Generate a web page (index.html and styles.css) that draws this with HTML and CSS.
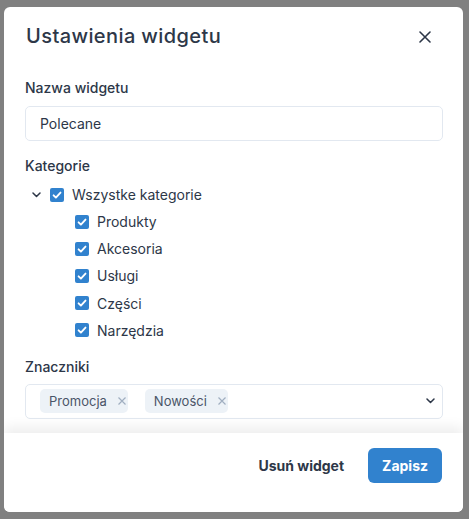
FILE: index.html
```html
<!DOCTYPE html>
<html lang="pl">
<head>
<meta charset="utf-8">
<title>Ustawienia widgetu</title>
<link rel="stylesheet" href="styles.css">
</head>
<body>
<div class="modal">
  <header class="modal-header">
    <h2 class="modal-title">Ustawienia widgetu</h2>
    <button class="close-btn" aria-label="Zamknij">
      <svg width="12" height="12" viewBox="0 0 12 12"><path d="M1 1L11 11M11 1L1 11" stroke="#2d3748" stroke-width="1.6" stroke-linecap="round"/></svg>
    </button>
  </header>
  <div class="modal-body">
    <label class="field-label">Nazwa widgetu</label>
    <div class="input">Polecane</div>

    <label class="field-label mt">Kategorie</label>
    <ul class="tree">
      <li class="tree-row root">
        <span class="chev"><svg width="9" height="6" viewBox="0 0 9 6"><path d="M1 1l3.5 3.5L8 1" fill="none" stroke="#2d3748" stroke-width="1.5" stroke-linecap="round" stroke-linejoin="round"/></svg></span>
        <span class="cb"><svg width="14" height="14" viewBox="0 0 14 14"><path d="M3.6 7.3l2.3 2.3 4.6-5" fill="none" stroke="#fff" stroke-width="1.9" stroke-linecap="round" stroke-linejoin="round"/></svg></span>
        <span class="item-text">Wszystke kategorie</span>
      </li>
      <li class="tree-row child">
        <span class="cb"><svg width="14" height="14" viewBox="0 0 14 14"><path d="M3.6 7.3l2.3 2.3 4.6-5" fill="none" stroke="#fff" stroke-width="1.9" stroke-linecap="round" stroke-linejoin="round"/></svg></span>
        <span class="item-text">Produkty</span>
      </li>
      <li class="tree-row child">
        <span class="cb"><svg width="14" height="14" viewBox="0 0 14 14"><path d="M3.6 7.3l2.3 2.3 4.6-5" fill="none" stroke="#fff" stroke-width="1.9" stroke-linecap="round" stroke-linejoin="round"/></svg></span>
        <span class="item-text">Akcesoria</span>
      </li>
      <li class="tree-row child">
        <span class="cb"><svg width="14" height="14" viewBox="0 0 14 14"><path d="M3.6 7.3l2.3 2.3 4.6-5" fill="none" stroke="#fff" stroke-width="1.9" stroke-linecap="round" stroke-linejoin="round"/></svg></span>
        <span class="item-text">Usługi</span>
      </li>
      <li class="tree-row child">
        <span class="cb"><svg width="14" height="14" viewBox="0 0 14 14"><path d="M3.6 7.3l2.3 2.3 4.6-5" fill="none" stroke="#fff" stroke-width="1.9" stroke-linecap="round" stroke-linejoin="round"/></svg></span>
        <span class="item-text">Części</span>
      </li>
      <li class="tree-row child">
        <span class="cb"><svg width="14" height="14" viewBox="0 0 14 14"><path d="M3.6 7.3l2.3 2.3 4.6-5" fill="none" stroke="#fff" stroke-width="1.9" stroke-linecap="round" stroke-linejoin="round"/></svg></span>
        <span class="item-text">Narzędzia</span>
      </li>
    </ul>

    <label class="field-label mt2">Znaczniki</label>
    <div class="select">
      <span class="tag">Promocja<span class="tag-x"><svg width="8" height="8" viewBox="0 0 8 8"><path d="M0.5 0.5L7.5 7.5M7.5 0.5L0.5 7.5" stroke="#a0aec0" stroke-width="1.2"/></svg></span></span>
      <span class="tag">Nowości<span class="tag-x"><svg width="8" height="8" viewBox="0 0 8 8"><path d="M0.5 0.5L7.5 7.5M7.5 0.5L0.5 7.5" stroke="#a0aec0" stroke-width="1.2"/></svg></span></span>
      <span class="select-chev"><svg width="9" height="6" viewBox="0 0 9 6"><path d="M1 1l3.5 3.5L8 1" fill="none" stroke="#2d3748" stroke-width="1.5" stroke-linecap="round" stroke-linejoin="round"/></svg></span>
    </div>
  </div>
  <footer class="modal-footer">
    <button class="btn ghost">Usuń widget</button>
    <button class="btn primary">Zapisz</button>
  </footer>
</div>
</body>
</html>
```
FILE: styles.css
```css
* { box-sizing: border-box; }
html, body { margin: 0; padding: 0; }
body {
  background: #808080;
  width: 469px;
  height: 519px;
  overflow: hidden;
  font-family: Inter, "Open Sans", sans-serif;
  color: #2d3748;
}
.modal {
  margin: 7px 0 0 4px;
  width: 459px;
  height: 505px;
  background: #fff;
  border-radius: 6px;
  overflow: hidden;
  display: flex;
  flex-direction: column;
}
.modal-header {
  height: 58px;
  flex: none;
  display: flex;
  align-items: center;
  justify-content: space-between;
  padding: 0 32px 0 22px;
}
.modal-title {
  margin: 0;
  font-size: 20px;
  line-height: 30px;
  font-weight: 500;
  letter-spacing: 0.4px;
  color: #2d3748;
}
.close-btn {
  border: 0;
  background: none;
  padding: 0;
  width: 12px;
  height: 12px;
  display: flex;
  margin-top: 1px;
}
.modal-body {
  flex: 1;
  overflow: hidden;
  padding: 13px 20px 0 21px;
  display: flex;
  flex-direction: column;
}
.field-label {
  display: block;
  font-size: 14px;
  line-height: 20px;
  font-weight: 500;
  color: #2d3748;
  margin-bottom: 8px;
}
.field-label.mt { margin-top: 15px; margin-bottom: 5px; }
.field-label.mt2 { margin-top: 13px; margin-bottom: 7px; }
.input {
  height: 35px;
  border: 1px solid #e2e8f0;
  border-radius: 5px;
  padding: 0 14px;
  display: flex;
  align-items: center;
  font-size: 14px;
  color: #2d3748;
  flex: none;
}
.tree {
  list-style: none;
  margin: 0;
  padding: 0;
  flex: none;
}
.tree-row {
  height: 27.2px;
  display: flex;
  align-items: center;
}
.tree-row.root { height: 27px; padding-left: 7px; }
.tree-row.child { padding-left: 50px; }
.chev {
  width: 9px;
  height: 6px;
  display: flex;
  margin-right: 9px;
}
.cb {
  width: 14px;
  height: 14px;
  border-radius: 2px;
  background: #3182ce;
  display: flex;
  flex: none;
}
.item-text {
  margin-left: 8px;
  font-size: 14px;
  color: #2d3748;
}
.select {
  height: 35px;
  border: 1px solid #e2e8f0;
  border-radius: 5px;
  display: flex;
  align-items: center;
  gap: 17px;
  padding: 0 7px 0 14px;
  flex: none;
}
.tag {
  height: 24px;
  border-radius: 5px;
  background: #edf2f7;
  color: #4a5568;
  font-size: 13px;
  display: inline-flex;
  align-items: center;
  padding: 0 2px 0 9px;
}
.tag-x {
  display: flex;
  margin-left: 11px;
}
.select-chev {
  margin-left: auto;
  width: 9px;
  height: 6px;
  display: flex;
}
.modal-footer {
  height: 79px;
  flex: none;
  position: relative;
  display: flex;
  justify-content: flex-end;
  align-items: flex-start;
  padding: 15px 21px 0 0;
  gap: 10px;
  background: #fff;
  box-shadow: 0 -6px 12px rgba(0, 0, 0, 0.07);
}
.btn {
  height: 35px;
  border: 0;
  border-radius: 6px;
  font-family: inherit;
  font-size: 14px;
  font-weight: 700;
  padding: 0 14px;
  cursor: pointer;
}
.btn.ghost { background: transparent; color: #2d3748; }
.btn.primary { background: #3182ce; color: #fff; }
```
